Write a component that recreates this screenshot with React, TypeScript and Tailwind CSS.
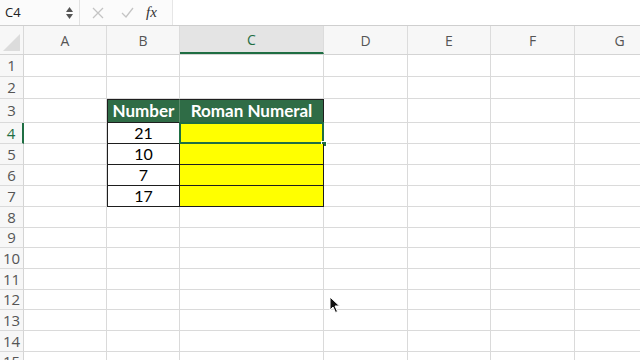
import { Fragment } from "react";

const cols = [
  { name: "A", w: 83 },
  { name: "B", w: 73 },
  { name: "C", w: 144 },
  { name: "D", w: 84 },
  { name: "E", w: 83 },
  { name: "F", w: 84 },
  { name: "G", w: 90 },
];

const rowHeights = [22, 22, 24, 21, 21, 21, 21, 20.7, 20.7, 20.7, 20.7, 20.7, 20.7, 20.7, 20.7];

const numbers: Record<number, string> = { 4: "21", 5: "10", 6: "7", 7: "17" };

const Cell = ({ row, col }: { row: number; col: string }) => {
  const inTable = row >= 3 && row <= 7 && (col === "B" || col === "C");
  if (!inTable) {
    return <div className="h-full border-r border-b border-[#dadada]" />;
  }
  if (row === 3) {
    return (
      <div
        className={`h-full flex items-center justify-center bg-[#2f6c46] text-white font-bold text-[17px] border-t border-b border-[#1e1e1e] ${
          col === "B" ? "border-l border-r border-r-[#5b8a6b]" : "border-r"
        }`}
      >
        {col === "B" ? "Number" : "Roman Numeral"}
      </div>
    );
  }
  if (col === "B") {
    return (
      <div className="h-full flex items-center justify-center bg-white text-black text-[16px] border-l border-r border-b border-[#1e1e1e]">
        {numbers[row]}
      </div>
    );
  }
  return (
    <div className="relative h-full bg-[#ffff00] border-r border-b border-[#1e1e1e]">
      {row === 4 && (
        <>
          <div className="absolute -left-px -top-px -right-px -bottom-px border-2 border-[#1f6e43]" />
          <div className="absolute -right-[4px] -bottom-[4px] w-[6px] h-[6px] bg-[#1f6e43] border border-white" />
        </>
      )}
    </div>
  );
};

export default function App() {
  return (
    <div
      className="w-[640px] h-[360px] overflow-hidden bg-white relative"
      style={{ fontFamily: "Lato, 'Open Sans', sans-serif" }}
    >
      {/* formula bar */}
      <div className="flex items-center h-[26px] border-b border-[#cfcfcf] bg-[#fbfbfb]">
        <div className="flex items-center w-[80px] h-full pl-[5px] pr-[6px] border-r border-[#e2e2e2]">
          <span className="flex-1 text-[13px] text-[#222]" style={{ fontFamily: "'Open Sans', sans-serif" }}>
            C4
          </span>
          <div className="flex flex-col items-center gap-[2px] text-[#555]">
            <svg width="7" height="5" viewBox="0 0 7 5">
              <path d="M3.5 0 L7 5 L0 5 Z" fill="#555" />
            </svg>
            <svg width="7" height="5" viewBox="0 0 7 5">
              <path d="M0 0 L7 0 L3.5 5 Z" fill="#555" />
            </svg>
          </div>
        </div>
        <div className="flex items-center w-[93px] h-full border-r border-[#e6e6e6]">
          <svg className="ml-[12px]" width="12" height="12" viewBox="0 0 12 12">
            <path d="M1 1 L11 11 M11 1 L1 11" stroke="#c4c4c4" strokeWidth="1.3" />
          </svg>
          <svg className="ml-[17px]" width="13" height="11" viewBox="0 0 13 11">
            <path d="M1 6 L5 10 L12 1" stroke="#c4c4c4" strokeWidth="1.3" fill="none" />
          </svg>
          <span
            className="ml-[12px] text-[15px] italic text-[#333]"
            style={{ fontFamily: "'Liberation Serif', serif" }}
          >
            fx
          </span>
        </div>
        <div className="flex-1 h-full bg-white" />
      </div>

      {/* header row */}
      <div className="flex h-[29px] bg-[#f7f7f7] border-b border-[#d4d4d4]">
        <div className="relative w-[24px] shrink-0 border-r border-[#d9d9d9]">
          <svg className="absolute right-[3px] bottom-[3px]" width="17" height="17" viewBox="0 0 17 17">
            <path d="M17 0 L17 17 L0 17 Z" fill="#dcdcdc" />
          </svg>
        </div>
        {cols.map((c) => (
          <div
            key={c.name}
            style={{ width: c.w }}
            className={`shrink-0 flex items-center justify-center text-[14px] border-r border-[#dcdcdc] ${
              c.name === "C" ? "bg-[#e4e4e4] text-[#1f6e43] border-b-2 border-b-[#1f6e43]" : "text-[#555]"
            }`}
          >
            <span style={{ fontFamily: "'Open Sans', sans-serif" }}>{c.name}</span>
          </div>
        ))}
      </div>

      {/* rows */}
      {rowHeights.map((h, i) => {
        const row = i + 1;
        return (
          <div key={row} className="flex" style={{ height: h }}>
            <div
              className={`w-[24px] shrink-0 flex items-center justify-center text-[15px] bg-[#f7f7f7] border-b border-[#dadada] ${
                row === 4
                  ? "text-[#1f6e43] bg-[#e4e4e4] border-r-2 border-r-[#1f6e43]"
                  : "text-[#555] border-r border-r-[#d4d4d4]"
              }`}
              style={{ fontFamily: "'Open Sans', sans-serif" }}
            >
              {row}
            </div>
            {cols.map((c) => (
              <Fragment key={c.name}>
                <div style={{ width: c.w }} className="shrink-0 h-full">
                  <Cell row={row} col={c.name} />
                </div>
              </Fragment>
            ))}
          </div>
        );
      })}

      {/* mouse pointer */}
      <svg className="absolute left-[329px] top-[296px]" width="12" height="18" viewBox="0 0 12 18">
        <path d="M1 1 L1 14 L4 11 L6.5 16.5 L8.5 15.5 L6 10 L10.5 10 Z" fill="#111" stroke="#fff" strokeWidth="1" />
      </svg>
    </div>
  );
}
